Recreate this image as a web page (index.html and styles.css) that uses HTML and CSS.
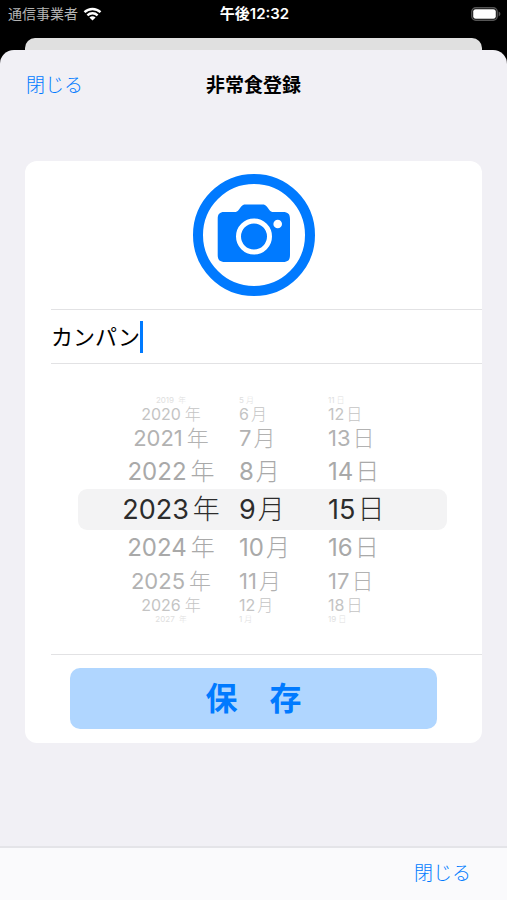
FILE: index.html
```html
<!DOCTYPE html>
<html lang="ja">
<head>
<meta charset="utf-8">
<meta name="viewport" content="width=device-width, initial-scale=1">
<title>非常食登録</title>
<link rel="stylesheet" href="styles.css">
</head>
<body>
<div class="status">
  <div class="carrier">
    <span>通信事業者</span>
    <svg class="wifi" viewBox="0 0 18 14" aria-hidden="true">
      <path d="M1 5.200a11.600 11.600 0 0 1 16 0M3.900 8.300a7.400 7.400 0 0 1 10.200 0" fill="none" stroke="#fff" stroke-width="2.400"/>
      <path d="M9 13.600 5.900 10.600a4.500 4.500 0 0 1 6.200 0z" fill="#fff"/>
    </svg>
  </div>
  <div class="time">午後12:32</div>
  <svg class="battery" viewBox="0 0 30 14" aria-hidden="true">
    <rect x=".8" y=".8" width="25.4" height="12.4" rx="4" fill="none" stroke="#555" stroke-width="1.4"/>
    <rect x="2.2" y="2.2" width="22.600" height="9.600" rx="2.4" fill="#fff"/>
    <path d="M27.6 4.600c2.4.8 2.4 4 0 4.800z" fill="#555"/>
  </svg>
</div>
<div class="behind"></div>
<main class="sheet">
  <header class="nav">
    <button class="link" type="button">閉じる</button>
    <h1>非常食登録</h1>
  </header>
  <form class="card">
    <div class="photo">
      <button class="camera" type="button" aria-label="写真を撮る">
        <svg viewBox="0 0 122 122" aria-hidden="true">
          <circle cx="61" cy="61" r="56" fill="none" stroke="#007aff" stroke-width="10"/>
          <path d="M31 38h10c2.600 0 3.600-.8 5-2.600l2-2.600c1.400-1.700 2.600-2.300 4.600-2.300h16.800c2 0 3.200.6 4.600 2.300l2 2.600c1.400 1.800 2.400 2.600 5 2.600h9c5 0 7 2 7 7v36c0 5-2 7-7 7H32c-5 0-7.300-2-7.300-7V45c0-5 2-7 6.300-7z" fill="#007aff"/>
          <circle cx="61" cy="62.500" r="15.500" fill="none" stroke="#fff" stroke-width="5"/>
          <circle cx="84.700" cy="50" r="4.300" fill="#fff"/>
        </svg>
      </button>
    </div>
    <div class="name">
      <input type="text" value="カンパン" aria-label="名前"><span class="caret"></span>
    </div>
    <div class="picker">
      <ul class="wheel year" aria-label="年">
        <li>2019<span>年</span></li>
        <li>2020<span>年</span></li>
        <li>2021<span>年</span></li>
        <li>2022<span>年</span></li>
        <li aria-current="true">2023<span>年</span></li>
        <li>2024<span>年</span></li>
        <li>2025<span>年</span></li>
        <li>2026<span>年</span></li>
        <li>2027<span>年</span></li>
      </ul>
      <ul class="wheel" aria-label="月">
        <li>5<span>月</span></li>
        <li>6<span>月</span></li>
        <li>7<span>月</span></li>
        <li>8<span>月</span></li>
        <li aria-current="true">9<span>月</span></li>
        <li>10<span>月</span></li>
        <li>11<span>月</span></li>
        <li>12<span>月</span></li>
        <li>1<span>月</span></li>
      </ul>
      <ul class="wheel" aria-label="日">
        <li>11<span>日</span></li>
        <li>12<span>日</span></li>
        <li>13<span>日</span></li>
        <li>14<span>日</span></li>
        <li aria-current="true">15<span>日</span></li>
        <li>16<span>日</span></li>
        <li>17<span>日</span></li>
        <li>18<span>日</span></li>
        <li>19<span>日</span></li>
      </ul>
    </div>
    <div class="actions">
      <button class="save" type="button">保　存</button>
    </div>
  </form>
  <footer class="toolbar">
    <button class="link" type="button">閉じる</button>
  </footer>
</main>
</body>
</html>
```
FILE: styles.css
```css
* { box-sizing: border-box; }

body {
  margin: 0;
  min-height: 100vh;
  display: flex;
  flex-direction: column;
  background: #000;
  color: #000;
  font-family: Inter, "Noto Sans CJK JP", sans-serif;
}

button, input { font: inherit; border: 0; padding: 0; background: none; }

.status {
  height: 38px;
  padding: 0 6px 10px 8px;
  display: grid;
  grid-template-columns: 1fr auto 1fr;
  align-items: center;
  color: #fff;
  font-size: 14px;
  line-height: 20px;
}
.carrier { display: flex; align-items: center; gap: 5px; color: #b4b4b4; }
.wifi { width: 19px; height: 14px; }
.time { font-size: 15px; font-weight: 600; }
.battery { width: 30px; height: 14px; justify-self: end; }

.behind {
  height: 12px;
  margin: 0 25px;
  border-radius: 10px 10px 0 0;
  background: #e0e0e0;
}

.sheet {
  flex: 1;
  display: flex;
  flex-direction: column;
  border-radius: 14px 14px 0 0;
  background: #f1f0f5;
  overflow: hidden;
}

.nav {
  height: 71px;
  padding: 0 26px;
  display: grid;
  grid-template-columns: 1fr auto 1fr;
  align-items: center;
}
.nav .link { justify-self: start; }
.link { color: #007aff; font-size: 19px; line-height: 28px; font-weight: 300; }
h1 { margin: 0; font-size: 19px; line-height: 28px; font-weight: 700; }

.card {
  margin: 40px 25px 0;
  border-radius: 12px;
  background: #fff;
}
.photo, .name, .picker { position: relative; }
.photo::after, .name::after, .picker::after {
  content: "";
  position: absolute;
  left: 26px;
  right: 0;
  bottom: 0;
  height: 1px;
  background: #e2e2e4;
}
.photo { padding: 13px 0; display: flex; justify-content: center; height: 149px; }
.camera { width: 122px; height: 122px; }
.camera svg { display: block; }

.name { height: 54px; padding-left: 26px; display: flex; align-items: center; }
.name input {
  field-sizing: content;
  font-size: 22px;
  line-height: 32px;
  outline: 0;
  caret-color: transparent;
}
.caret { width: 3px; height: 32px; background: #007aff; }

.picker {
  height: 291px;
  padding: 30px 35px 0 53px;
  display: grid;
  grid-template-columns: 161fr 89fr 119fr;
}
.picker::before {
  content: "";
  position: absolute;
  left: 53px;
  right: 35px;
  top: 125px;
  height: 41px;
  border-radius: 9px;
  background: #f3f3f4;
}
.wheel { position: relative; margin: 0; padding: 0; list-style: none; color: #a9a9a9; }
.wheel li { display: flex; gap: 2px; white-space: nowrap; }
.wheel span { font-weight: 300; }
.year { padding-left: 25px; }
.year li { justify-content: center; gap: 4px; }
.wheel li:nth-child(1), .wheel li:nth-child(9) {
  height: 12px; line-height: 12px; font-size: 8px; color: #dedede;
}
.wheel li:nth-child(2), .wheel li:nth-child(8) {
  height: 16px; line-height: 16px; font-size: 16px; color: #c4c4c4;
}
.wheel li:nth-child(3), .wheel li:nth-child(7) {
  height: 32px; line-height: 32px; font-size: 22px; color: #b2b2b2;
}
.wheel li:nth-child(4), .wheel li:nth-child(6) {
  height: 35px; line-height: 35px; font-size: 24px;
}
.wheel li:nth-child(5) {
  height: 41px; line-height: 41px; font-size: 27px; color: #2c2c2c;
}

.actions { padding: 13px 45px 14px; }
.save {
  display: block;
  width: 100%;
  height: 61px;
  border-radius: 10px;
  background: #b0d6ff;
  color: #007aff;
  font-size: 32px;
  line-height: 48px;
  font-weight: 700;
}

.toolbar {
  margin-top: auto;
  height: 54px;
  padding: 0 36px;
  display: flex;
  align-items: center;
  justify-content: flex-end;
  border-top: 2px solid #e4e4e8;
  background: #fafafc;
}
```
